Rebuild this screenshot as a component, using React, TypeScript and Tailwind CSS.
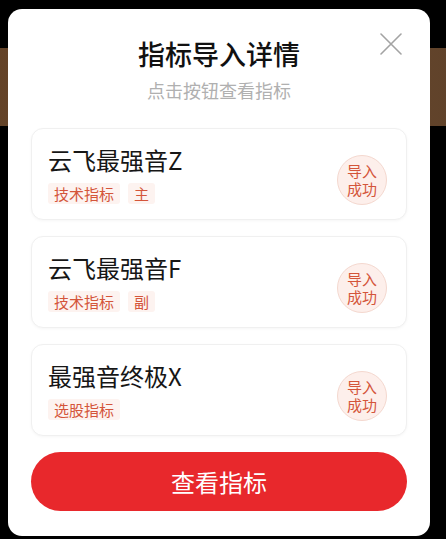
import React from 'react'

const items = [
  { name: '云飞最强音Z', tags: ['技术指标', '主'] },
  { name: '云飞最强音F', tags: ['技术指标', '副'] },
  { name: '最强音终极X', tags: ['选股指标'] },
]

function CloseIcon() {
  return (
    <svg width="22" height="22" viewBox="0 0 22 22" fill="none">
      <path d="M1 1L21 21M21 1L1 21" stroke="#a3a3a3" strokeWidth="1.6" strokeLinecap="round" />
    </svg>
  )
}

function IndicatorCard({ name, tags }: { name: string; tags: string[] }) {
  return (
    <div className="flex items-center justify-between h-[92px] rounded-[12px] border border-[#f0f0f0] bg-white shadow-[0_1px_3px_rgba(0,0,0,0.04)] pl-[16px] pr-[19px]">
      <div className="flex flex-col">
        <p className="text-[24px] leading-[32px] text-[#161616]">{name}</p>
        <div className="flex gap-[8px] mt-[7px]">
          {tags.map(t => (
            <span key={t} className="px-[6px] h-[21px] leading-[21px] text-[15px] text-[#d4553a] bg-[#fdf3f0] rounded-[3px]">
              {t}
            </span>
          ))}
        </div>
      </div>
      <div className="mt-[12px] w-[50px] h-[50px] rounded-full bg-[#fdefeb] border border-[#f4d8cf] flex items-center justify-center">
        <p className="w-[31px] text-center text-[15px] leading-[18px] text-[#d4553a] break-all">导入成功</p>
      </div>
    </div>
  )
}

export default function App() {
  return (
    <div
      className="relative w-[446px] h-[539px] bg-black overflow-hidden"
      style={{ fontFamily: '"Noto Sans CJK SC", "Noto Sans", sans-serif' }}
    >
      {/* dimmed page behind the dialog */}
      <div className="absolute inset-x-0 top-[48px] h-[78px] bg-gradient-to-r from-[#6e4a2c] via-[#7a5433] to-[#6b4a2f] opacity-90" />

      <div className="relative ml-[8px] mt-[9px] w-[422px] h-[527px] bg-white rounded-[14px] flex flex-col px-[23px] pt-[27px]">
        <button className="absolute right-[28px] top-[24px]">
          <CloseIcon />
        </button>
        <h1 className="text-center text-[27px] leading-[36px] font-medium text-[#111]">指标导入详情</h1>
        <p className="mt-[6px] text-center text-[18px] leading-[24px] text-[#b0b0b0]">点击按钮查看指标</p>

        <div className="mt-[26px] flex flex-col gap-[16px]">
          {items.map(it => (
            <IndicatorCard key={it.name} name={it.name} tags={it.tags} />
          ))}
        </div>

        <button className="mt-[16px] h-[59px] rounded-full bg-[#e8282c] text-white text-[24px] flex items-center justify-center">
          查看指标
        </button>
      </div>
    </div>
  )
}
